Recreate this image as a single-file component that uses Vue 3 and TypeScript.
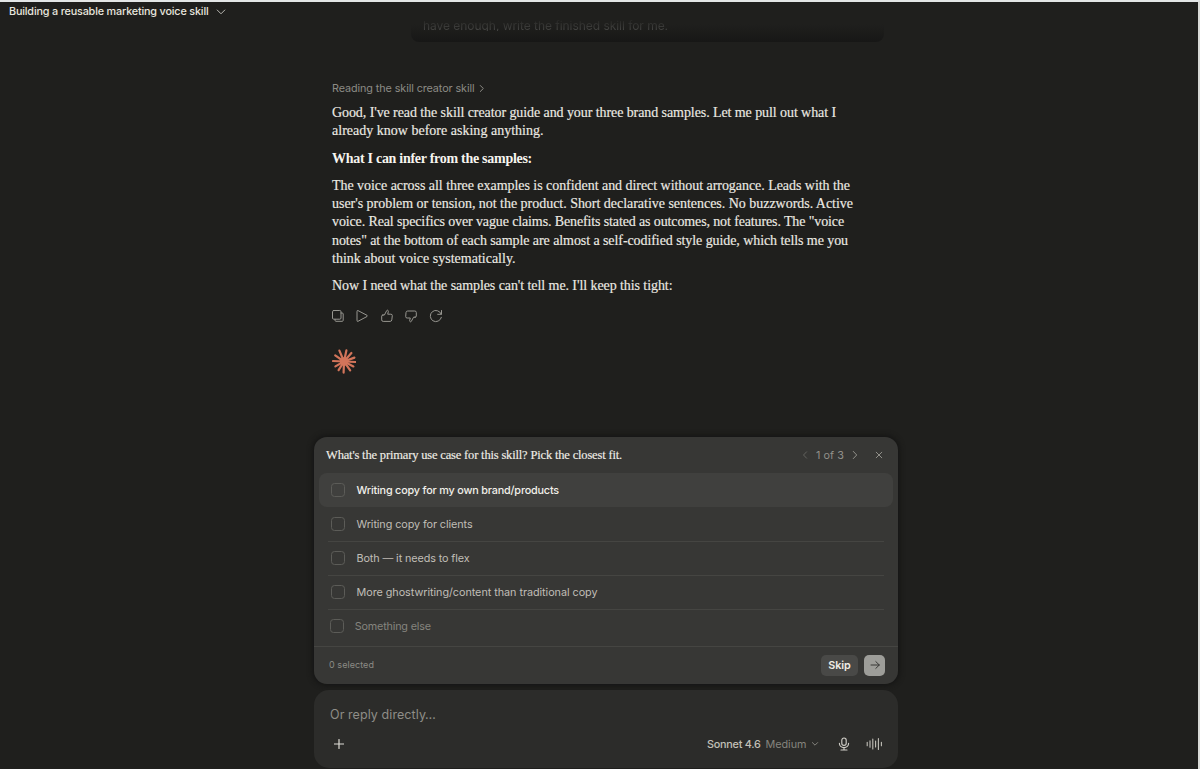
<script setup lang="ts">
import type { Directive } from 'vue'

interface Line { text: string; width: number }
interface Paragraph { lines: Line[]; bold?: boolean }
interface Option { text: string; width: number; kind?: 'active' | 'other' }

const paragraphs: Paragraph[] = [
  {
    lines: [
      { text: "Good, I've read the skill creator guide and your three brand samples. Let me pull out what I", width: 504 },
      { text: 'already know before asking anything.', width: 211.5 },
    ],
  },
  { bold: true, lines: [{ text: 'What I can infer from the samples:', width: 200 }] },
  {
    lines: [
      { text: 'The voice across all three examples is confident and direct without arrogance. Leads with the', width: 518 },
      { text: "user's problem or tension, not the product. Short declarative sentences. No buzzwords. Active", width: 521 },
      { text: 'voice. Real specifics over vague claims. Benefits stated as outcomes, not features. The "voice', width: 512 },
      { text: 'notes" at the bottom of each sample are almost a self-codified style guide, which tells me you', width: 516 },
      { text: 'think about voice systematically.', width: 183.5 },
    ],
  },
  { lines: [{ text: "Now I need what the samples can't tell me. I'll keep this tight:", width: 340.5 }] },
]

const options: Option[] = [
  { text: 'Writing copy for my own brand/products', width: 202.5, kind: 'active' },
  { text: 'Writing copy for clients', width: 116 },
  { text: 'Both — it needs to flex', width: 113 },
  { text: 'More ghostwriting/content than traditional copy', width: 241 },
  { text: 'Something else', width: 76, kind: 'other' },
]

// Tracks a text run so that it fills the given measure.
const vFit: Directive<HTMLElement, number> = {
  mounted(el, binding) {
    const length = (el.textContent ?? '').length
    const natural = el.getBoundingClientRect().width
    el.style.letterSpacing = `${(binding.value - natural) / length}px`
  },
}

const rays = [
  [23.3, 13], [21.4, 17.4], [18.2, 21.4], [11.6, 23.6], [6.6, 21.2], [3.4, 17.4],
  [1, 12], [3.2, 6.4], [7.4, 1.6], [14.4, 1.4], [19.4, 4], [22.4, 8.6],
]
</script>

<template>
  <div class="page">
    <header class="topbar">
      <span v-fit="199.5" class="run">Building a reusable marketing voice skill</span>
      <svg class="title-chevron" viewBox="0 0 10 6"><path d="M1.2 1 5 4.8 8.8 1" /></svg>
    </header>

    <div class="bubble"><span v-fit="245" class="run">have enough, write the finished skill for me.</span></div>

    <main class="message">
      <div class="status">
        <span v-fit="142.5" class="run">Reading the skill creator skill</span>
        <svg viewBox="0 0 6 9"><path d="M1.3 1.5 4.3 4.5 1.3 7.5" /></svg>
      </div>
      <p v-for="(p, i) in paragraphs" :key="i" :class="{ bold: p.bold }">
        <span v-for="line in p.lines" :key="line.text" v-fit="line.width" class="line">{{ line.text }}</span>
      </p>
      <div class="actions">
        <svg viewBox="0 0 14 14"><rect x="1.5" y="1.5" width="8.5" height="8.7" rx="1.2" /><path d="M10 4h1.2q1 0 1 1v6.3q0 1-1 1H5q-1 0-1-1v-1" /></svg>
        <svg viewBox="0 0 14 14"><path d="M2 2.2q0-1.1 1-.6l9 4.7q.9.6 0 1.2l-9 4.8q-1 .5-1-.6Z" /></svg>
        <svg viewBox="0 0 14 14"><path d="M2.9 6h1.5L6.6 1.8q.3-.8 1-.6 1 .3.7 1.5l-.6 2.5h3.1q1.6 0 1.5 1.4l-.5 4.3q-.2 1.5-1.7 1.5H3.2q-1.5 0-1.5-1.5V7.1q0-1.1 1.2-1.1Z" /></svg>
        <svg viewBox="0 0 14 14"><path d="M11.1 8.2H9.6l-2.2 4q-.3.8-1 .6-1-.3-.7-1.5l.6-2.3H3.2q-1.6 0-1.5-1.4l.3-4.1q.2-1.5 1.7-1.5h7.1q1.5 0 1.5 1.5v3.6q0 1.1-1.2 1.1Z" /></svg>
        <svg viewBox="0 0 14 14"><path d="M12.5 1.5v3.8H8.7M12.2 5.1A5.6 5.6 0 1 0 12.4 8.3" /></svg>
      </div>
      <svg class="spark" viewBox="0 0 24 25">
        <path v-for="(r, i) in rays" :key="i" :d="`M12 12.5L${r[0]} ${r[1]}`" />
        <circle cx="12" cy="12.5" r="4.2" />
      </svg>
    </main>

    <section class="dock">
      <div class="card">
        <div class="question">
          <span v-fit="296" class="run prompt">What's the primary use case for this skill? Pick the closest fit.</span>
          <div class="pager">
            <svg class="dim" viewBox="0 0 6 10"><path d="M4.6 1.8 1.5 5l3.1 3.2" /></svg>
            <span v-fit="28" class="run">1 of 3</span>
            <svg viewBox="0 0 6 10"><path d="M1.3 1.4 4.7 5 1.3 8.6" /></svg>
            <svg class="close" viewBox="0 0 8 8"><path d="m1.2 1.2 5.6 5.6M6.8 1.2 1.2 6.8" /></svg>
          </div>
        </div>
        <ul class="options">
          <li v-for="o in options" :key="o.text" :class="o.kind">
            <i class="box"></i>
            <span v-fit="o.width" class="run">{{ o.text }}</span>
          </li>
        </ul>
        <footer class="card-foot">
          <span v-fit="45" class="run count">0 selected</span>
          <button class="skip"><span v-fit="22.5" class="run">Skip</span></button>
          <button class="next"><svg viewBox="0 0 12 12"><path d="M2 6h8.3M6.8 2.6 10.3 6 6.8 9.4" /></svg></button>
        </footer>
      </div>

      <div class="composer">
        <div class="placeholder"><span v-fit="106" class="run">Or reply directly…</span></div>
        <div class="tools">
          <svg class="plus" viewBox="0 0 10 10"><path d="M5 .5v9M.5 5h9" /></svg>
          <span v-fit="53.5" class="run model">Sonnet 4.6</span>
          <span v-fit="41" class="run effort">Medium</span>
          <svg class="effort-chevron" viewBox="0 0 8 6"><path d="M1.4 1.6 4 4.2l2.6-2.6" /></svg>
          <svg class="mic" viewBox="0 0 12 14"><rect x="3.8" y="1" width="4.4" height="7.4" rx="2.2" /><path d="M1.4 6.3a4.6 4.3 0 0 0 9.2 0M6 10.7v2.2M3 13h6" /></svg>
          <svg class="wave" viewBox="0 0 17 14"><path d="M1.2 5.2v3.6M4 3.8v6.4M6.8 2v10M9.6 4v6M12.4 1.6v10.8M15.4 5.2v3.6" /></svg>
        </div>
      </div>
    </section>
  </div>
</template>

<style>
body { margin: 0; overflow: hidden; background: #1f1f1d; }
</style>

<style scoped>
.page {
  box-sizing: border-box;
  width: 1200px;
  height: 769px;
  overflow: hidden;
  border-top: 2px solid #e3e6e6;
  border-right: 2px solid #d9dad7;
  background: #1f1f1d;
  font-family: Inter, "Liberation Sans", sans-serif;
  font-size: 10.8px;
  color: #e8e6df;
}
.run { display: inline-block; white-space: nowrap; }
svg { display: block; flex: none; fill: none; stroke: currentColor; stroke-width: 1; stroke-linecap: round; stroke-linejoin: round; }
.topbar { display: flex; align-items: center; height: 18px; padding-left: 9px; font-weight: 500; }
.title-chevron { width: 10px; height: 6px; margin: 1px 0 0 7px; color: #b9b8b2; }
.bubble {
  box-sizing: border-box;
  width: 473px;
  height: 22px;
  margin-left: 411px;
  padding: 0 0 0 12px;
  border-radius: 0 0 8px 8px;
  background: linear-gradient(#1f1f1d 20%, #171716);
  font-size: 12px;
  line-height: 11px;
  color: #3b3b39;
}
.bubble .run {
  color: transparent;
  background: linear-gradient(#252523, #484846);
  background-clip: text;
}
.message { width: 540px; margin: 37px 0 0 332px; }
.status { display: flex; align-items: center; height: 18px; margin-bottom: 7px; color: #8c8b85; }
.status svg { width: 6px; height: 9px; margin-left: 4.5px; }
p { margin: 0 0 9px; font: 14px/18.3px "Liberation Serif", serif; color: #eceae3; -webkit-text-stroke: 0.15px currentColor; }
p.bold { font-weight: 700; color: #f7f5ef; -webkit-text-stroke: 0; }
.line { display: block; width: max-content; white-space: nowrap; }
.actions { display: flex; gap: 10.4px; margin: 13px 0 0 -1px; color: #979690; }
.actions svg { width: 14px; height: 14px; }
.spark { width: 24px; height: 25px; margin-top: 26.5px; stroke: #d2745a; stroke-width: 2.2; }
.spark circle { fill: #d2745a; stroke: none; }
.dock { width: 584px; margin: 62.5px 0 0 314px; }
.card {
  display: flex;
  flex-direction: column;
  box-sizing: border-box;
  height: 247px;
  border-radius: 13px;
  background: #373735;
  box-shadow: 0 0 5px 2px #161615;
}
.question { display: flex; align-items: center; justify-content: space-between; box-sizing: border-box; height: 36px; padding: 1px 15px 0 12px; }
.prompt { font: 12.5px "Liberation Serif", serif; color: #f0eee7; -webkit-text-stroke: 0.15px currentColor; }
.pager { display: flex; align-items: center; color: #91908a; }
.pager svg { width: 6px; height: 10px; }
.pager .dim { color: #62625e; margin-right: 8px; }
.pager .run { margin-right: 8px; }
.pager .close { width: 8px; height: 8px; margin-left: 17px; }
.options { margin: 0; padding: 0 5px; list-style: none; }
.options li {
  display: flex;
  align-items: center;
  box-sizing: border-box;
  height: 34px;
  margin: 0 9px;
  padding-left: 2.5px;
  border-bottom: 1px solid #454542;
  color: #c0beb7;
}
.options .active { margin: 0; padding-left: 11.5px; border: 0; border-radius: 8px; background: #40403e; color: #f2f0ea; font-weight: 500; }
.options .active .run { padding-top: 1px; }
.options li:nth-child(2) { height: 35px; padding-top: 1px; }
.options .other { padding-left: 1.5px; border-color: transparent; color: #85847e; }
.options .other .box { margin-right: 11.3px; }
.box { box-sizing: border-box; width: 14px; height: 14px; margin-right: 12px; border: 1px solid #5c5c58; border-radius: 3.5px; }
.card-foot {
  display: flex;
  flex: 1;
  align-items: center;
  margin-top: 2px;
  padding: 0 13px 0 15px;
  border-top: 1px solid #454542;
}
.count { margin-right: auto; padding-bottom: 1px; font-size: 9px; color: #8c8b85; }
button { display: flex; align-items: center; justify-content: center; height: 21px; padding: 0; border: 0; border-radius: 5px; font: inherit; }
.skip { width: 37px; margin-right: 6px; background: #494947; font-weight: 600; color: #eeece5; }
.next { width: 21px; background: #9d9d99; color: #373735; }
.next svg { width: 12px; height: 12px; }
.composer { box-sizing: border-box; height: 78px; margin-top: 6px; padding: 15px 15px 0 16px; border-radius: 15px; background: #2c2c2a; }
.placeholder { height: 20px; font-size: 12.5px; line-height: 20px; color: #8e8d87; }
.tools { display: flex; align-items: center; height: 18px; margin-top: 10px; }
.tools .run { padding-top: 1px; }
.plus { width: 10px; height: 10px; margin: 0 auto 0 4px; color: #dedcd5; stroke-width: 1.2; }
.model { color: #c2c0b8; font-weight: 500; }
.effort { margin-left: 5px; color: #85847e; }
.effort-chevron { width: 8px; height: 6px; margin-left: 4px; color: #85847e; }
.mic { width: 12px; height: 14px; margin-left: 19px; color: #d0cec7; stroke-width: 1.15; }
.wave { width: 17px; height: 14px; margin: 0 0 0 16.5px; color: #c2c0b8; stroke-width: 1.1; }
</style>
